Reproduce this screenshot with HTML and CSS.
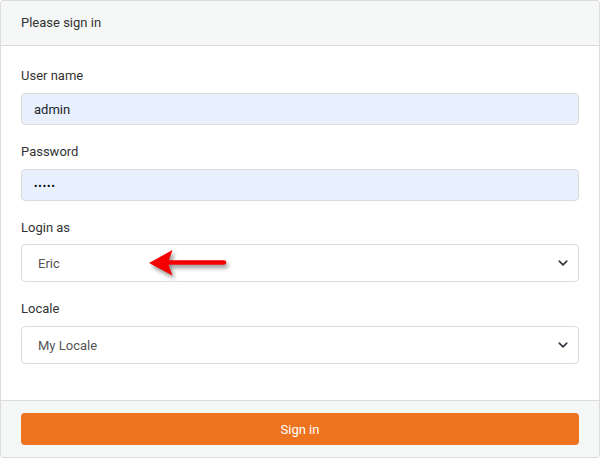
FILE: index.html
```html
<!DOCTYPE html>
<html>
<head>
<meta charset="utf-8">
<link rel="stylesheet" href="styles.css">
</head>
<body>
<div class="card">
  <div class="card-header">Please sign in</div>
  <div class="card-body">
    <div class="group">
      <label class="label">User name</label>
      <input class="input autofill" type="text" value="admin">
    </div>
    <div class="group">
      <label class="label">Password</label>
      <input class="input autofill" type="password" value="abcde">
    </div>
    <div class="group select-group">
      <label class="label">Login as</label>
      <div class="select-wrap">
        <select class="select"><option>Eric</option></select>
        <svg class="chevron" viewBox="0 0 16 16" width="16" height="12" aria-hidden="true"><path d="M3 5.5l5 5 5-5" fill="none" stroke="#343a40" stroke-width="2.2" stroke-linecap="round" stroke-linejoin="round"/></svg>
      </div>
    </div>
    <div class="group select-group last">
      <label class="label">Locale</label>
      <div class="select-wrap">
        <select class="select"><option>My Locale</option></select>
        <svg class="chevron" viewBox="0 0 16 16" width="16" height="12" aria-hidden="true"><path d="M3 5.5l5 5 5-5" fill="none" stroke="#343a40" stroke-width="2.2" stroke-linecap="round" stroke-linejoin="round"/></svg>
      </div>
    </div>
  </div>
  <div class="card-footer">
    <button class="btn">Sign in</button>
  </div>
  <svg class="arrow" viewBox="140 245 100 40" width="100" height="40" aria-hidden="true">
    <g class="arrow-shape">
      <path d="M149 263 L172.5 250 L168 263 L172.5 275.5 Z" fill="#f50000"/>
      <line x1="166" y1="262.5" x2="224" y2="262.5" stroke="#f50000" stroke-width="4.5" stroke-linecap="round"/>
    </g>
  </svg>
</div>
</body>
</html>
```

FILE: styles.css
```css
html, body {
  margin: 0;
  padding: 0;
  background: #ffffff;
}
body {
  font-family: Roboto, "Liberation Sans", Arial, sans-serif;
  font-size: 13px;
  color: #333333;
}
.card {
  position: relative;
  width: 600px;
  height: 458px;
  box-sizing: border-box;
  border: 1px solid #dcdcdc;
  border-radius: 3px;
  display: flex;
  flex-direction: column;
  overflow: hidden;
}
.card-header {
  height: 44px;
  line-height: 44px;
  padding: 0 20px;
  background: #f5f6f6;
  border-bottom: 1px solid #dcdcdc;
  color: #333333;
}
.card-body {
  flex: 1;
  padding: 20px 20px 20px 20px;
}
.group {
  margin-bottom: 17px;
}
.group.last {
  margin-bottom: 0;
}
.label {
  display: block;
  line-height: 19px;
  margin-bottom: 8px;
  color: #333333;
}
.select-group:not(.last) .label {
  margin-bottom: 7px;
}
.input {
  display: block;
  width: 100%;
  height: 32px;
  box-sizing: border-box;
  border: 1px solid #dcdcdc;
  border-radius: 4px;
  padding: 0 12px;
  font-family: Roboto, "Liberation Sans", Arial, sans-serif;
  font-size: 13px;
  color: #212529;
  outline: none;
}
.autofill {
  background: #e8f0fe;
}
.input[type=password] {
  font-size: 10px;
  letter-spacing: 1px;
  color: #000000;
  padding-top: 2px;
}
.select-wrap {
  position: relative;
}
.select {
  display: block;
  width: 100%;
  height: 38px;
  box-sizing: border-box;
  border: 1px solid #dcdcdc;
  border-radius: 4px;
  padding: 0 36px 0 16px;
  background: #ffffff;
  font-family: Roboto, "Liberation Sans", Arial, sans-serif;
  font-size: 13px;
  color: #555555;
  -webkit-appearance: none;
  appearance: none;
  outline: none;
}
.chevron {
  position: absolute;
  right: 8px;
  top: 13px;
  pointer-events: none;
}
.card-footer {
  background: #f5f6f6;
  border-top: 1px solid #dcdcdc;
  padding: 12px 20px;
}
.btn {
  display: block;
  width: 100%;
  height: 32px;
  border: none;
  border-radius: 4px;
  background: #ed731f;
  color: #ffffff;
  font-family: Roboto, "Liberation Sans", Arial, sans-serif;
  font-size: 13px;
  cursor: pointer;
}
.arrow {
  position: absolute;
  left: 139px;
  top: 244px;
  overflow: visible;
}
.arrow-shape {
  filter: drop-shadow(2px 3px 2px rgba(0, 0, 0, 0.45));
}
```
